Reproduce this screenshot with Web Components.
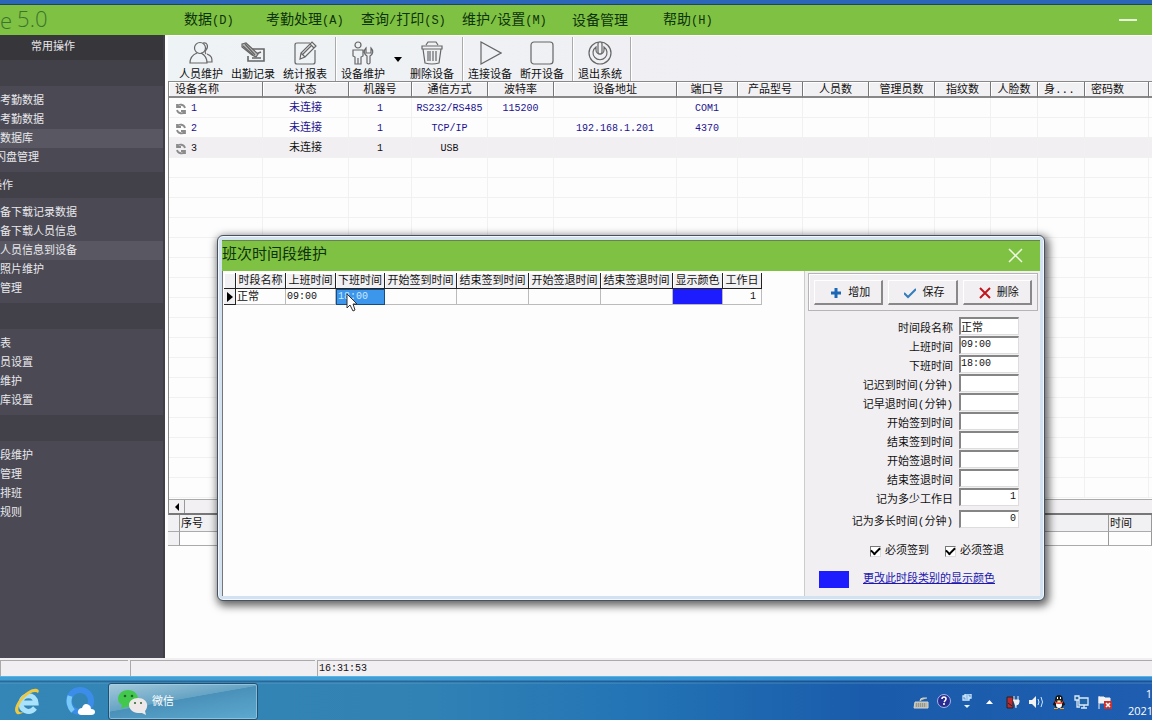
<!DOCTYPE html>
<html lang="zh-CN">
<head>
<meta charset="utf-8">
<title>考勤管理</title>
<style>
html,body{margin:0;height:100%}
body{font-family:"Liberation Mono","Noto Sans CJK SC",monospace;font-size:11px;line-height:16px;color:#111;overflow:hidden}
</style>
</head>
<body>
<attendance-app></attendance-app>
<script>
const define = (name, html, setup) => customElements.define(name, class extends HTMLElement {
  constructor() {
    super();
    const t = document.createElement('template');
    t.innerHTML = `<style>*{box-sizing:border-box}button,input{font:inherit;color:inherit}button{background:none;border:0;padding:0;margin:0}</style>` + html;
    this.attachShadow({mode: 'open'}).appendChild(t.content.cloneNode(true));
  }
  connectedCallback() { if (setup) setup(this, this.shadowRoot); }
});

const ICONS = {
  users: '<path d="M17 13c-1-1-1-3 0-4 3-4 1-8-3-7M18 13c5 2 5 4 5 8h-5"/><circle cx="11" cy="7" r="5.500"/><path d="M8 12c-5 2-7 5-7 10h17c0-5-2-8-6-10"/>',
  record: '<path d="M11 8h12v12H7v-5M11 17h9M15 13l5-2" stroke-width="1.600"/><path d="M1 3l4-1 12 11-2 3-4-2L1 6z" fill="#bbb"/><path d="M4 3l10 11M2 5l10 9"/>',
  report: '<path d="M17 2H4Q2 2 2 4v17q0 2 2 2h16q2 0 2-2V9"/><path d="M7 18l1-6L19 1l4 4-11 11zM17 3l4 4M8 12l4 4M10 13l8-8"/>',
  service: '<circle cx="7" cy="4" r="3"/><path d="M2 9h10v6l-2 1v7H7v-6 6H4v-7l-2-1zM15 7c-3 3-2 6 1 8v7q1.500 2 3 0v-7c3-2 4-5 1-8v5h-5z"/>',
  trash: '<path d="M2 5h20v3H2zM6 4l2-3h8l2 3M3 8l2 14q7 2 14 0l2-14M8 10v10M10 10v10M13 10v10M16 10v10"/>',
  play: '<path d="M3 1v22l20-11z"/>',
  stop: '<rect x="1" y="1" width="22" height="22" rx="3"/>',
  power: '<circle cx="12" cy="12" r="11"/><path d="M8 6a7 7 0 1 0 8 0v3a4 4 0 1 1-8 0z"/><rect x="10" y="1" width="4" height="12" rx="2" fill="#eef0f3"/>'
};

define('tool-button', `
<style>
:host{display:block;width:52px}
button{display:flex;flex-direction:column;align-items:center;width:100%;white-space:nowrap}
svg{width:24px;height:24px;fill:none;stroke:#666;stroke-width:1.2;margin:4px 0 2px;flex:none}
</style>
<button><svg viewBox="0 0 24 24"></svg><span><slot></slot></span></button>`,
(el, r) => r.querySelector('svg').innerHTML = ICONS[el.getAttribute('icon')]);

define('tool-bar', `
<style>
:host{display:flex;height:46px;flex:none;padding:1px 0 0 7px;background:linear-gradient(90deg,#eef3f6,#f0eff3 60%);border-top:1px solid #fff}
div{display:flex;border-right:1px solid #aaa;box-shadow:1px 0 #fff;padding-right:4px}
div+div{padding-left:1px}
i{width:17px;align-self:center;display:flex;justify-content:center}
i::before{content:"";border:4px solid transparent;border-top:5px solid #000;border-bottom:0}
</style>
<div><tool-button icon="users">人员维护</tool-button><tool-button icon="record">出勤记录</tool-button><tool-button icon="report">统计报表</tool-button></div>
<div><tool-button icon="service">设备维护</tool-button><i></i><tool-button icon="trash">删除设备</tool-button></div>
<div><tool-button icon="play">连接设备</tool-button><tool-button icon="stop">断开设备</tool-button></div>
<div><tool-button icon="power">退出系统</tool-button></div>`);

define('menu-bar', `
<style>
:host{display:flex;align-items:center;height:35px;flex:none;border-top:4px solid #2c66b8;background:#7fc142;color:#0d330a;box-shadow:inset 0 1px #23435e;overflow:hidden}
h1{width:184px;margin:0;flex:none;font:300 22px/24px "Open Sans",sans-serif;color:#3b7430;height:28px;display:flex;gap:5px;align-items:center}
b{font-weight:300;align-self:flex-start}
nav{display:grid;grid-template-columns:82px 95px 101px 110px 91px 1fr;flex:1;font-size:14px;line-height:20px;padding-top:2px}
nav button{text-align:left;white-space:nowrap}
small{font-size:12px}
.min{width:18px;height:20px;margin-right:15px;display:flex;align-items:center}
.min::before{content:"";height:2px;width:100%;background:#e6f7da}
</style>
<h1><span>e</span><b>5.0</b></h1>
<nav><button>数据<small>(D)</small></button><button>考勤处理<small>(A)</small></button><button>查询<small>/</small>打印<small>(S)</small></button><button>维护<small>/</small>设置<small>(M)</small></button><button>设备管理</button><button>帮助<small>(H)</small></button></nav>
<button class="min" aria-label="最小化"></button>`);

define('nav-section', `
<style>
:host{display:block}
h3{margin:0;height:26px;font:inherit;line-height:28px;background:#42414a;overflow:hidden;white-space:nowrap}
.cut{text-indent:-9px}
div{padding:5px 0}
</style>
<h3 class="cut"></h3><div><slot></slot></div>`,
(el, r) => r.querySelector('h3').textContent = el.getAttribute('label') || '');

define('side-nav', `
<style>
:host{display:block;width:165px;flex:none;background:#4b4a54;color:#e8e8ec;border-right:2px solid #403f48;overflow:hidden}
h2{margin:0;height:25px;font:inherit;line-height:25px;padding-left:31px;background:#37363b}
a{display:block;color:inherit;text-decoration:none;height:19px;line-height:21px;white-space:nowrap}
.on{background:#595862}
.cut{text-indent:-5px}
</style>
<h2>常用操作</h2>
<nav>
<nav-section><a href="#">考勤数据</a><a href="#">考勤数据</a><a href="#" class="on">数据库</a><a href="#" class="cut">闪盘管理</a></nav-section>
<nav-section label="操作"><a href="#">备下载记录数据</a><a href="#">备下载人员信息</a><a href="#" class="on">人员信息到设备</a><a href="#">照片维护</a><a href="#">管理</a></nav-section>
<nav-section><a href="#">表</a><a href="#">员设置</a><a href="#">维护</a><a href="#">库设置</a></nav-section>
<nav-section><a href="#">段维护</a><a href="#">管理</a><a href="#">排班</a><a href="#">规则</a></nav-section>
</nav>`);

const COLS = [['设备名称',94],['状态',86],['机器号',63],['通信方式',76],['波特率',66],['设备地址',123],['端口号',61],['产品型号',65],['人员数',66],['管理员数',66],['指纹数',56],['人脸数',47],['身...',47],['密码数',64],['',60]];
const DEVICES = [['1','未连接','1','RS232/RS485','115200','','COM1'],['2','未连接','1','TCP/IP','','192.168.1.201','4370'],['3','未连接','1','USB']];
const SYNC = '<svg viewBox="0 0 12 12"><path d="M10 5C9 1 4 1 2 3M2 1v3h4M2 7c1 4 6 4 8 2M10 11V8H6" fill="none" stroke="#8b8b8b" stroke-width="1.8"/></svg>';

define('device-grid', `
<style>
:host{display:flex;flex-direction:column;flex:1;min-height:0;border-left:1px solid #888;border-top:1px solid #888;background:#fdfdfd;overflow:hidden}
section{flex:1;min-height:0;overflow:hidden}
table{border-collapse:separate;border-spacing:0;table-layout:fixed;width:1040px;min-width:100%}
th{height:16px;line-height:12px;padding:2px 0 0;font-weight:400;background:#f1f0f2;border-right:1px solid #777;border-bottom:2px solid #888;box-shadow:inset 1px 1px #fff;white-space:nowrap}
th.l{text-align:left;padding-left:6px}
td{height:20px;padding:2px 0 0;text-align:center;border-right:1px solid #f1f1f1;border-bottom:1px solid #f1f1f1;font-size:10px;color:#23128f;white-space:nowrap;line-height:17px}
td:nth-child(2){font-size:11px}
td:first-child{text-align:left;padding-left:6px}
td span{display:flex;align-items:center;gap:4px}
tr.sel td{background:#f2eff2;color:#111}
svg{width:12px;height:12px}
.bar{height:16px;flex:none;display:flex;background:#f2f0f2;border-top:1px solid #aaa;border-bottom:2px solid #777}
.bar button{width:16px;border-right:1px solid #999;display:flex;align-items:center;justify-content:center}
.bar button::before{content:"";border:4px solid transparent;border-right-color:#000;border-left:0}
</style>
<section><table><colgroup></colgroup><thead><tr></tr></thead><tbody></tbody></table></section>
<div class="bar"><button aria-label="向左滚动"></button></div>`,
(el, r) => {
  r.querySelector('colgroup').innerHTML = COLS.map(c => `<col style="width:${c[1]}px">`).join('');
  r.querySelector('thead tr').innerHTML = COLS.map((c, i) => `<th${[0,12,13].includes(i) ? ' class="l"' : ''}>${c[0]}</th>`).join('');
  const rows = DEVICES.concat(Array.from({length: 17}, () => []));
  r.querySelector('tbody').innerHTML = rows.map((d, n) => `<tr${n === 2 ? ' class="sel"' : ''}>` + COLS.map((c, i) => `<td>${i === 0 && d[0] ? `<span>${SYNC}${d[0]}</span>` : d[i] || ''}</td>`).join('') + '</tr>').join('');
});

define('log-panes', `
<style>
:host{display:flex;height:143px;flex:none;background:#fdfdfd;overflow:hidden}
section{flex:1}
section:first-child{flex:0 1 760px;border-right:2px solid #777}
table{border-collapse:separate;border-spacing:0;table-layout:fixed;width:100%}
th,td{border-right:1px solid #999;border-bottom:1px solid #aaa;text-align:left;font-weight:400;padding:0 0 0 1px;overflow:hidden;white-space:nowrap}
th{height:17px;line-height:14px;padding-top:2px;background:#f1f0f2}
td{height:14px}
.ind{width:12px;background:#f1f0f2}.end{width:43px}.no{width:60px}
</style>
<section><table><tr><th class="ind"></th><th class="no">序号</th><th></th></tr><tr><td class="ind"></td><td></td><td></td></tr></table></section>
<section><table><tr><th></th><th class="end">时间</th></tr><tr><td></td><td></td></tr></table></section>`);

define('status-bar', `
<style>
:host{display:grid;grid-template-columns:128px 185px 1fr;gap:2px;height:18px;flex:none;background:#f1eff2;padding-top:2px}
span{border-top:1px solid #aaa;border-left:1px solid #aaa;font-size:10px;line-height:15px;padding-left:1px}
span:first-child{border-left:0}
</style>
<span></span><span></span><span>16:31:53</span>`);

define('task-bar', `
<style>
:host{display:flex;height:44px;flex:none;align-items:center;padding-top:6px;border-top:1px solid #59b5e5;color:#fff;overflow:hidden;
background:linear-gradient(180deg,#50b5ee88 0 3px,#173f7066 4px 5px,#7cb8dc66 6px,transparent 7px),linear-gradient(90deg,#3386b5,#3283b4 35%,#2374b5 55%,#1a5cab 75%,#1e5db0)}
button,.tray{display:flex;align-items:center}
.q{width:54px;height:36px;justify-content:center}
.q:first-child{padding-right:14px}
.task{width:150px;height:37px;gap:4px;padding-left:9px;border:1px solid #234f70;border-radius:3px;background:linear-gradient(170deg,#a5cadb,#66a3c4 45%,#4a91ba 46%,#5da9cf);box-shadow:inset 0 0 0 1px #a8d5ec99}
.tray{margin-left:auto;gap:7px}
.tray svg{width:16px;height:16px}
.clock{width:24px;margin-left:8px;font-size:11px;line-height:17px;font-family:"Open Sans",sans-serif;text-align:right}
.clock span{display:block}
</style>
<button class="q" aria-label="浏览器"><svg width="32" height="32" viewBox="0 0 32 32"><path d="M24 22c-6 7-15 2-14-6s14-9 15 1H11" fill="none" stroke="#a9e2fa" stroke-width="5"/><path d="M26 3c-9-3-28 19-20 25 2 1 5-1 7-2-4 1-7 0-5-6C11 12 22 3 27 7q2-3-1-4" fill="#ecc940"/></svg></button>
<button class="q" aria-label="云浏览器"><svg width="30" height="30" viewBox="0 0 30 30"><circle cx="14" cy="14" r="11" fill="none" stroke="#3b8de9" stroke-width="6"/><path d="M7 24a11 13 0 0 1-3-15" fill="none" stroke="#78c9f5" stroke-width="5"/><path d="M15 28q-4-1-3-4t4-3q2-6 7-3 2 1 2 4 4 0 4 3t-4 3z" fill="#fff"/></svg></button>
<button class="task"><svg width="30" height="26" viewBox="0 0 30 26"><path d="M10 1c-6 0-10 4-10 9 0 3 2 5 4 6l-1 4 4-2h6c5-2 7-5 7-8 0-5-4-9-10-9" fill="#42c94d"/><path d="M20 9c-5 0-9 3-9 7s4 8 9 8h4l4 2-1-4c5-6 1-13-7-13" fill="#eee9e8"/><g fill="#27602b"><circle cx="7" cy="7" r="1.3"/><circle cx="14" cy="7" r="1.3"/><circle cx="17" cy="14" r="1"/><circle cx="23" cy="14" r="1"/></g></svg><span>微信</span></button>
<div class="tray">
<svg viewBox="0 0 16 16"><path d="M2 8h13v6H1zM7 7q0-3 3-3h4" fill="#b8b8ad" stroke="#d6d5c8"/><path d="M3 10h10M3 12h10" stroke="#777" stroke-dasharray="1"/></svg>
<svg viewBox="0 0 16 16"><circle cx="8" cy="7" r="6.5" fill="#282b91" stroke="#a5b6e4"/><path d="M6 5q0-2 2-2t2 2q0 1-2 3M8 9v2" fill="none" stroke="#fff" stroke-width="1.6"/></svg>
<svg viewBox="0 0 16 16"><path d="M6 0h6v4H6zM4 2h6v4H4z" fill="none" stroke="#cfeaff" stroke-width="1.300"/><path d="M5 11h6l-3 3z" fill="#e6f4ff"/></svg>
<svg viewBox="0 0 16 16"><path d="M4 10h7L7.500 6z" fill="#fff"/></svg>
<svg viewBox="0 0 16 16"><path d="M2 3h6v11H2z" fill="#b92c31" stroke="#222"/><path d="M9 2v4M13 2v4M8 6h6v2q0 3-3 3v3" fill="#eee" stroke="#eee"/><path d="M3 9l4 3" stroke="#222"/></svg>
<svg viewBox="0 0 16 16"><path d="M1 6h3l4-4v12l-4-4H1z" fill="#f2f2f2"/><path d="M10 5q2 3 0 6M13 3q3 5 0 10" fill="none" stroke="#cfe8ff"/></svg>
<svg viewBox="0 0 16 16"><path d="M8 1c-4 0-4 4-4 6-3 3-2 5-1 4l2 3h6l2-3c1 1 2-1-1-4 0-2 0-6-4-6" fill="#191919"/><ellipse cx="8" cy="10.500" rx="3" ry="3.500" fill="#fff"/><path d="M6 3h1v2H6zM9 3h1v2H9z" fill="#fff"/><path d="M4 7q4 3 8 0v2q-4 2-8 0z" fill="#e23b2c"/><path d="M5 6h6l-3 1zM3 14h4v1H3zM9 14h4v1H9z" fill="#efa72a"/></svg>
<svg viewBox="0 0 16 16"><path d="M5 4h9v7H5zM7 14h6M10 11v3M1 2h4v4H1zM3 6v7h3" fill="#2065a7" stroke="#ddebf6" stroke-width="1.300"/></svg>
<svg viewBox="0 0 16 16"><path d="M2 2v13M2 3h5l1 1h5v6H8L7 9H2z" fill="#f1f1f1" stroke="#f1f1f1"/><rect x="7" y="7" width="8" height="8" fill="#ca3230"/><path d="M9 9l4 4M13 9l-4 4" stroke="#fff" stroke-width="1.500"/></svg>
<div class="clock"><span>1</span><span>2021</span></div>
</div>`);

define('field-row', `
<style>
:host{display:grid;grid-template-columns:1fr 60px;column-gap:6px;height:19px;align-items:start}
label{text-align:right;line-height:24px;height:19px;white-space:nowrap}
input{width:60px;height:18px;border:0;border-top:2px solid #858585;border-left:2px solid #858585;border-right:1px solid #ddd;border-bottom:1px solid #ddd;background:#fff;padding:0 2px 2px 0;font-size:10px;outline:0}
.num{text-align:right}.zh{font-size:11px}
</style>
<label for="f"></label><input id="f">`,
(el, r) => {
  const f = r.querySelector('input');
  r.querySelector('label').textContent = el.getAttribute('label');
  f.value = el.getAttribute('value') || '';
  f.className = el.getAttribute('kind') || '';
});

define('shift-grid', `
<style>
:host{display:block;background:#fdfdfd;padding:2px 0 0 1px;border-right:1px solid #ccc}
table{border-collapse:separate;border-spacing:0;table-layout:fixed;width:538px}
th,td{padding:0;white-space:nowrap;overflow:hidden;font-weight:400;height:16px;line-height:14px}
th{background:#f1f0f2;border-right:1px solid #222;border-bottom:1px solid #222;box-shadow:inset 1px 1px #fff;line-height:14px;padding-top:1px}
td{border-right:1px solid #bbb;border-bottom:1px solid #bbb;padding-left:1px;font-size:10px}
td.zh{font-size:11px}
.ind{background:#f1f0f2;border-color:#222;padding-left:3px}
.ind::before{content:"";display:block;width:0;border:5px solid transparent;border-left:6px solid #000;border-right:0}
.sel{background:#3b96ec;color:#cbe8ff;border:1px solid #174c83}
.blue{background:#1c1cff}
.r{text-align:right;padding-right:5px}
</style>
<table>
<colgroup><col style="width:12px"><col style="width:50px"><col style="width:50px"><col style="width:49px"><col style="width:72px"><col style="width:72px"><col style="width:72px"><col style="width:72px"><col style="width:50px"><col style="width:39px"></colgroup>
<tr><th></th><th>时段名称</th><th>上班时间</th><th>下班时间</th><th>开始签到时间</th><th>结束签到时间</th><th>开始签退时间</th><th>结束签退时间</th><th>显示颜色</th><th>工作日</th></tr>
<tr><td class="ind"></td><td class="zh">正常</td><td>09:00</td><td class="sel">18:00</td><td></td><td></td><td></td><td></td><td class="blue"></td><td class="r">1</td></tr>
</table>`);

define('shift-form', `
<style>
:host{display:block;background:#f1eff2;padding:2px 2px 0 3px}
.acts{display:flex;gap:5px;padding:6px 5px;height:38px;border:1px solid #b5b5b8;box-shadow:inset 1px 1px #fff}
.acts button{flex:1;height:25px;display:flex;align-items:center;justify-content:center;gap:6px;border:1px solid #fff;border-right:2px solid #888;border-bottom:2px solid #888;padding:2px 0 0 4px;white-space:nowrap}
svg{width:12px;height:12px;fill:none}
.fields{padding:6px 19px 0 0}
.gap{margin-top:3px}
.checks{display:flex;justify-content:flex-end;gap:16px;margin:13px 34px 0 0}
.checks label{display:flex;align-items:center;gap:4px;height:18px;white-space:nowrap}
.checks input{appearance:none;width:11px;height:11px;margin:0;background:#fff;border:1px solid #ddd;border-top-color:#777;border-left-color:#777;display:grid;place-items:center}
.checks input:checked::before{content:"";width:7px;height:4px;border-left:2px solid #000;border-bottom:2px solid #000;transform:rotate(-45deg);margin-bottom:2px}
.color{display:flex;align-items:center;gap:14px;padding-left:11px;margin-top:10px;height:18px}
.color i{width:30px;height:17px;background:#1c1cff}
a{color:#2116b0;white-space:nowrap}
</style>
<div class="acts">
<button><svg viewBox="0 0 12 12"><path d="M6 1v10M1 6h10" stroke="#1d68b5" stroke-width="3"/></svg>增加</button>
<button><svg viewBox="0 0 12 12"><path d="M0 6l4 4 8-8" stroke="#347dbb" stroke-width="2"/></svg>保存</button>
<button><svg viewBox="0 0 12 12"><path d="M1 1l10 10M11 1L1 11" stroke="#c3161c" stroke-width="2"/></svg>删除</button>
</div>
<div class="fields">
<field-row label="时间段名称" value="正常" kind="zh"></field-row>
<field-row label="上班时间" value="09:00"></field-row>
<field-row label="下班时间" value="18:00"></field-row>
<field-row label="记迟到时间(分钟)"></field-row>
<field-row label="记早退时间(分钟)"></field-row>
<field-row label="开始签到时间"></field-row>
<field-row label="结束签到时间"></field-row>
<field-row label="开始签退时间"></field-row>
<field-row label="结束签退时间"></field-row>
<field-row label="记为多少工作日" value="1" kind="num"></field-row>
<field-row class="gap" label="记为多长时间(分钟)" value="0" kind="num"></field-row>
</div>
<div class="checks"><label><input type="checkbox" checked>必须签到</label><label><input type="checkbox" checked>必须签退</label></div>
<div class="color"><i></i><a href="#">更改此时段类别的显示颜色</a></div>`);

define('shift-dialog', `
<style>
:host{display:flex;flex-direction:column;border:1px solid #48515d;border-radius:6px;padding:4px;background:#d3e2f1;box-shadow:inset 0 0 0 1px #f2f8ff,2px 3px 9px 2px #0009}
header{display:flex;align-items:center;justify-content:space-between;height:31px;flex:none;background:#7fc142;color:#0d330a;padding-right:17px;box-shadow:inset 0 1px #66834c}
h2{margin:0;font:inherit;font-size:15px;line-height:22px}
header svg{display:block;width:15px;height:15px;stroke:#eefbe2;stroke-width:1.500}
main{display:grid;grid-template-columns:1fr 235px;flex:1;min-height:0;border-left:1px solid #777;overflow:hidden}
</style>
<header><h2>班次时间段维护</h2><button aria-label="关闭"><svg viewBox="0 0 15 15"><path d="M1 1l13 13M14 1L1 14"/></svg></button></header>
<main><shift-grid></shift-grid><shift-form></shift-form></main>`);

define('attendance-app', `
<style>
:host{display:flex;flex-direction:column;height:100vh;position:relative;overflow:hidden}
.body{display:flex;flex:1;min-height:0;background:#fdfdfd}
.work{flex:1;min-width:0;display:flex;flex-direction:column;padding-left:3px}
shift-dialog{position:absolute;left:217px;top:235px;width:828px;height:366px}
.pointer{position:absolute;left:346px;top:293px;width:13px;height:19px}
</style>
<menu-bar></menu-bar>
<div class="body"><side-nav></side-nav><div class="work"><tool-bar></tool-bar><device-grid></device-grid><log-panes></log-panes></div></div>
<status-bar></status-bar>
<task-bar></task-bar>
<shift-dialog></shift-dialog>
<svg class="pointer" viewBox="0 0 13 19"><path d="M1 1v14l3-3 3 6 2-1-2-6h4z" fill="#fff" stroke="#333"/></svg>`);
</script>
</body>
</html>
